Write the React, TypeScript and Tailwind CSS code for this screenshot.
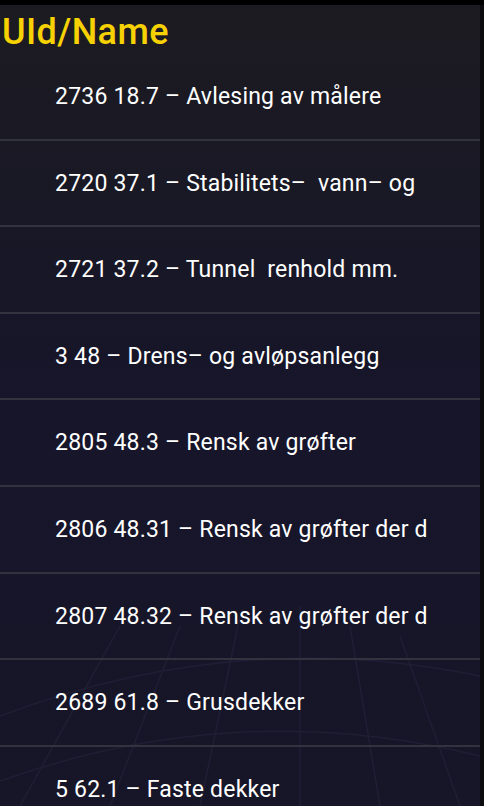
import React from "react";

const rows = [
  "2736 18.7 – Avlesing av målere",
  "2720 37.1 – Stabilitets–  vann– og",
  "2721 37.2 – Tunnel  renhold mm.",
  "3 48 – Drens– og avløpsanlegg",
  "2805 48.3 – Rensk av grøfter",
  "2806 48.31 – Rensk av grøfter der d",
  "2807 48.32 – Rensk av grøfter der d",
  "2689 61.8 – Grusdekker",
  "5 62.1 – Faste dekker",
];

export default function App() {
  return (
    <div
      className="relative w-[484px] h-[806px] overflow-hidden bg-[#0c0c10]"
      style={{ fontFamily: "Roboto, 'Noto Sans', sans-serif" }}
    >
      <div className="h-[5px] bg-black" />
      <div className="relative w-[480px] h-[801px] overflow-hidden bg-gradient-to-b from-[#1c1b21] via-[#16152a] to-[#171628]">
        <svg
          className="absolute left-0 bottom-0 pointer-events-none"
          width="480"
          height="240"
          viewBox="0 0 480 240"
        >
          <g stroke="#1f1e34" strokeWidth="1.5" fill="none">
            <path d="M20 240 L120 60" />
            <path d="M110 240 L180 60" />
            <path d="M200 240 L240 50" />
            <path d="M300 240 L300 40" />
            <path d="M380 240 L350 60" />
            <path d="M460 240 L400 70" />
            <path d="M0 150 Q240 60 480 110" />
            <path d="M0 215 Q240 130 480 190" />
          </g>
        </svg>
        <div className="relative">
          <div className="h-[49px] pl-[2px] flex items-end">
            <span className="text-[36px] leading-[44px] font-medium text-[#f7d203] tracking-[0.4px]">
              UId/Name
            </span>
          </div>
          {rows.map((r, i) => (
            <div
              key={i}
              className="h-[86.6px] border-b-2 border-[#33323f] flex items-center pl-[55px] pt-[2px]"
            >
              <span className="text-[23px] text-white whitespace-pre tracking-[0.2px]">
                {r}
              </span>
            </div>
          ))}
        </div>
      </div>
    </div>
  );
}
